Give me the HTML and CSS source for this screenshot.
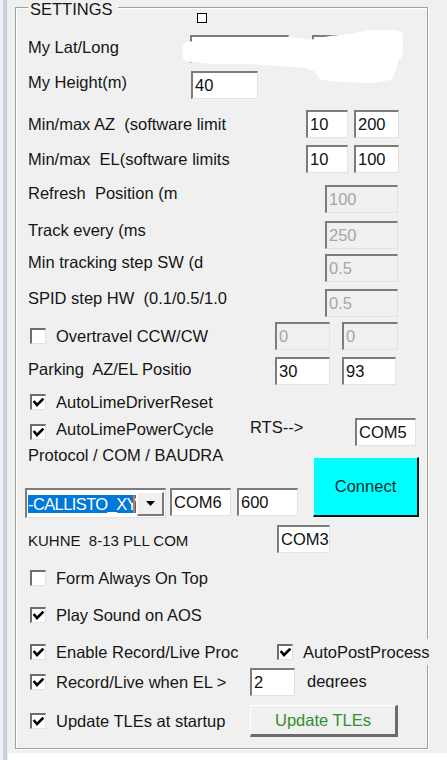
FILE: index.html
```html
<!DOCTYPE html>
<html>
<head>
<meta charset="utf-8">
<title>Settings</title>
<link rel="stylesheet" href="styles.css">
</head>
<body>
<div class="screen">
  <div class="strip"></div>
  <div class="main">
    <div class="group-wrap">
      <div class="group">
        <div class="legend">SETTINGS</div>
        <div class="marker"></div>
        <svg class="redact" width="224" height="58" viewBox="0 0 224 58"><path d="M1 19 C3 16 5 15 7 15 L19 13 L49 12 L81 11 L109 10 C118 11 124 12 129 13 C138 11 144 10 149 9 L169 7 C180 5 186 3 191 3 L211 3 C217 3 222 5 222 7 L222 25 C221 30 219 33 217 35 C216 40 215 43 214 45 C213 50 211 52 209 53 L191 56 L159 55 L141 53 C137 51 136 48 135 45 C130 43 127 42 124 41 L99 39 L69 37 L34 37 L9 35 C5 34 3 33 2 31 Z" fill="#fff"/></svg>

        <div class="row mt27">
          <span class="lbl w162 up2">My Lat/Long</span>
          <span class="tb w99"></span>
          <span class="tb w88 ml23"></span>
        </div>
        <div class="row mt8">
          <span class="lbl w163 up3">My Height(m)</span>
          <span class="tb w67">40</span>
        </div>
        <div class="row mt11">
          <span class="lbl grow">Min/max AZ&nbsp; (software limit</span>
          <span class="tb w42">10</span>
          <span class="tb w45 ml6">200</span>
        </div>
        <div class="row mt7">
          <span class="lbl grow">Min/max&nbsp; EL(software limits</span>
          <span class="tb w42">10</span>
          <span class="tb w45 ml6">100</span>
        </div>
        <div class="row mt11 h29 pr29">
          <span class="lbl grow up5">Refresh&nbsp; Position (m</span>
          <span class="tb dis w73">100</span>
        </div>
        <div class="row mt8 pr29">
          <span class="lbl grow up5">Track every (ms</span>
          <span class="tb dis w73">250</span>
        </div>
        <div class="row mt4 h29 pr29">
          <span class="lbl grow up5">Min tracking step SW (d</span>
          <span class="tb dis w73">0.5</span>
        </div>
        <div class="row mt7 pr29">
          <span class="lbl grow up5">SPID step HW&nbsp; (0.1/0.5/1.0</span>
          <span class="tb dis w73">0.5</span>
        </div>
        <div class="row mt5 pr29">
          <span class="cb"></span>
          <span class="lbl cbl grow">Overtravel CCW/CW</span>
          <span class="tb dis w55">0</span>
          <span class="tb dis w56 ml12">0</span>
        </div>
        <div class="row mt7 pr31">
          <span class="lbl grow up2">Parking&nbsp; AZ/EL Positio</span>
          <span class="tb w55">30</span>
          <span class="tb w54 ml12">93</span>
        </div>
        <div class="row mt3">
          <span class="cb"><svg viewBox="0 0 13 13" width="13" height="13"><path d="M2.5 6 L5 9 L10.5 3.5" class="tick"/></svg></span>
          <span class="lbl cbl">AutoLimeDriverReset</span>
        </div>
        <div class="row mt1 h29">
          <span class="cb"><svg viewBox="0 0 13 13" width="13" height="13"><path d="M2.5 6 L5 9 L10.5 3.5" class="tick"/></svg></span>
          <span class="lbl cbl w194 up2">AutoLimePowerCycle</span>
          <span class="lbl w105 up4">RTS--&gt;</span>
          <span class="tb w61">COM5</span>
        </div>

        <div class="proto">
          <div class="proto-left">
            <div class="lbl proto-lbl">Protocol / COM / BAUDRA</div>
            <div class="combo-row">
              <div class="combo">
                <div class="combo-text"><span class="sel">-CALLISTO_XY</span><span class="caret"></span></div>
                <div class="combo-btn"><svg width="9" height="5" viewBox="0 0 9 5"><path d="M0 0 H9 L4.5 5 Z" fill="#000"/></svg></div>
              </div>
              <span class="tb w61 h27 ml4">COM6</span>
              <span class="tb w61 h27 ml6">600</span>
            </div>
          </div>
          <div class="btn-connect">Connect</div>
        </div>

        <div class="row mt7">
          <span class="lbl small w249">KUHNE&nbsp; 8-13 PLL COM</span>
          <span class="tb w53">COM3</span>
        </div>
        <div class="row mt11">
          <span class="cb"></span>
          <span class="lbl cbl">Form Always On Top</span>
        </div>
        <div class="row mt9">
          <span class="cb"><svg viewBox="0 0 13 13" width="13" height="13"><path d="M2.5 6 L5 9 L10.5 3.5" class="tick"/></svg></span>
          <span class="lbl cbl">Play Sound on AOS</span>
        </div>
        <div class="row mt9">
          <span class="cb"><svg viewBox="0 0 13 13" width="13" height="13"><path d="M2.5 6 L5 9 L10.5 3.5" class="tick"/></svg></span>
          <span class="lbl cbl w221">Enable Record/Live Proc</span>
          <span class="cb nml"><svg viewBox="0 0 13 13" width="13" height="13"><path d="M2.5 6 L5 9 L10.5 3.5" class="tick"/></svg></span>
          <span class="lbl cbl over">AutoPostProcess</span>
        </div>
        <div class="row mt1 h30">
          <span class="cb"><svg viewBox="0 0 13 13" width="13" height="13"><path d="M2.5 6 L5 9 L10.5 3.5" class="tick"/></svg></span>
          <span class="lbl cbl w194">Record/Live when EL &gt;</span>
          <span class="tb w45 h30">2</span>
          <span class="lbl clipped">degrees</span>
        </div>
        <div class="row mt8 h32">
          <span class="cb"><svg viewBox="0 0 13 13" width="13" height="13"><path d="M2.5 6 L5 9 L10.5 3.5" class="tick"/></svg></span>
          <span class="lbl cbl w194">Update TLEs at startup</span>
          <span class="btn">Update TLEs</span>
        </div>
      </div>
    </div>
    <div class="bottom-white"></div>
  </div>
</div>
</body>
</html>
```

FILE: styles.css
```css
* { box-sizing: border-box; }
html, body { margin: 0; padding: 0; }
body {
  width: 447px;
  height: 760px;
  overflow: hidden;
  background: #f0f0f0;
  font-family: "Liberation Sans", Arial, sans-serif;
  font-size: 16.5px;
  color: #151515;
}
.screen { display: flex; width: 447px; height: 760px; }
.strip {
  width: 8px;
  flex: none;
  border-left: 3px solid #f0f0f0;
  border-right: 1px solid #ececec;
  background: #c9d1e6;
}
.main { flex: 1; min-width: 0; display: flex; flex-direction: column; }
.group-wrap { padding: 7px 0 0 7px; }
.group {
  position: relative;
  width: 413px;
  height: 742px;
  border: 1px solid #a0a0a0;
  box-shadow: 1px 1px 0 #fff, inset 1px 1px 0 #fff;
  display: flex;
  flex-direction: column;
}
.bottom-white { margin-top: 4px; height: 7px; background: #fff; }

.legend {
  position: absolute;
  left: 12px;
  top: -8px;
  padding: 0 5px 0 2px;
  line-height: 19px;
  background: #f0f0f0;
}
.marker {
  position: absolute;
  left: 181px;
  top: 5px;
  width: 10px;
  height: 10px;
  border: 1px solid #000;
  background: #fff;
}
.redact { position: absolute; left: 165px; top: 19px; z-index: 2; }

.row {
  display: flex;
  align-items: center;
  flex: none;
  height: 28px;
  min-width: 0;
  padding: 0 28px 0 12px;
}
.h27 { height: 27px; }
.h29 { height: 29px; }
.h30 { height: 30px; }
.h32 { height: 32px; }
.pr29 { padding-right: 29px; }
.pr31 { padding-right: 31px; }
.mt1 { margin-top: 1px; }
.mt3 { margin-top: 3px; }
.mt4 { margin-top: 4px; }
.mt5 { margin-top: 5px; }
.mt7 { margin-top: 7px; }
.mt8 { margin-top: 8px; }
.mt9 { margin-top: 9px; }
.mt11 { margin-top: 11px; }
.mt27 { margin-top: 27px; }
.ml4 { margin-left: 4px; }
.ml6 { margin-left: 6px; }
.ml12 { margin-left: 12px; }
.ml23 { margin-left: 23px; }

.lbl { white-space: nowrap; line-height: 19px; flex: none; }
.grow { flex: 1; min-width: 0; }
.up2 { margin-bottom: 4px; }
.up3 { margin-bottom: 6px; }
.up4 { margin-bottom: 8px; }
.up5 { margin-bottom: 10px; }
.w162 { width: 162px; }
.w163 { width: 163px; }
.w194 { width: 194px; }
.w105 { width: 105px; }
.w221 { width: 221px; }
.w249 { width: 249px; }
.small { font-size: 15px; margin-top: 3px; }

.tb {
  flex: none;
  display: flex;
  align-items: center;
  height: 28px;
  padding-left: 2px;
  border-style: solid;
  border-width: 2px 1px 1px 2px;
  border-color: #7c7c7c #e2e2e2 #e2e2e2 #7c7c7c;
  background: #fff;
  line-height: 1;
  color: #111;
}
.tb.dis { background: #f0f0f0; color: #a6a6a6; }
.w42 { width: 42px; }
.w45 { width: 45px; }
.w53 { width: 53px; }
.w54 { width: 54px; }
.w55 { width: 55px; }
.w56 { width: 56px; }
.w61 { width: 61px; }
.w67 { width: 67px; }
.w73 { width: 73px; }
.w88 { width: 88px; }
.w99 { width: 99px; }

.cb {
  flex: none;
  width: 16px;
  height: 16px;
  margin-left: 2px;
  border-style: solid;
  border-width: 2px 1px 1px 2px;
  border-color: #6e6e6e #e2e2e2 #e2e2e2 #6e6e6e;
  background: #fff;
  display: flex;
  align-items: center;
  justify-content: center;
}
.cb svg { display: block; }
.cb.nml { margin-left: 0; }
.tick { fill: none; stroke: #000; stroke-width: 2.6; stroke-linecap: square; }
.cbl { margin-left: 10px; }
.over {
  background: #f0f0f0;
  line-height: 26px;
  position: relative;
  z-index: 1;
}
.clipped {
  margin-left: 12px;
  height: 16px;
  overflow: hidden;
  margin-bottom: 4px;
}

.proto { display: flex; flex: none; padding-left: 9px; }
.proto-left { width: 288px; display: flex; flex-direction: column; }
.proto-lbl { padding-left: 3px; }
.combo-row { display: flex; align-items: flex-start; margin-top: 23px; }
.combo {
  width: 141px;
  height: 30px;
  display: flex;
  align-items: center;
  padding: 1px 1px 1px 0;
  border-style: solid;
  border-width: 2px 1px 1px 2px;
  border-color: #7c7c7c #e2e2e2 #e2e2e2 #7c7c7c;
  background: #fff;
}
.combo-text {
  width: 109px;
  height: 18px;
  overflow: hidden;
  display: flex;
  align-items: center;
  position: relative;
  padding-left: 1px;
}
.sel {
  background: #0078d7;
  color: #fff;
  white-space: nowrap;
  line-height: 18px;
  letter-spacing: -0.6px;
  padding-right: 4px;
}
.caret {
  position: absolute;
  right: 1px;
  top: 0;
  width: 2px;
  height: 18px;
  background: #e5702a;
}
.combo-btn {
  width: 27px;
  height: 24px;
  margin-left: 1px;
  display: flex;
  align-items: center;
  justify-content: center;
  background: #f0f0f0;
  border-style: solid;
  border-width: 1px 2px 2px 1px;
  border-color: #fff #7a7a7a #7a7a7a #fff;
}
.btn-connect {
  width: 106px;
  height: 60px;
  margin-top: 11px;
  display: flex;
  align-items: center;
  justify-content: center;
  background: #00ffff;
  border-style: solid;
  border-width: 1px 2px 2px 1px;
  border-color: #d8ffff #161616 #161616 #d8ffff;
  color: #0e2a2a;
}
.btn {
  flex: none;
  width: 148px;
  height: 32px;
  display: flex;
  align-items: center;
  justify-content: center;
  background: #f0f0f0;
  border-style: solid;
  border-width: 1px 3px 3px 1px;
  border-color: #ffffff #6b6b6b #6b6b6b #ffffff;
  color: #2f8f2f;
}
```
